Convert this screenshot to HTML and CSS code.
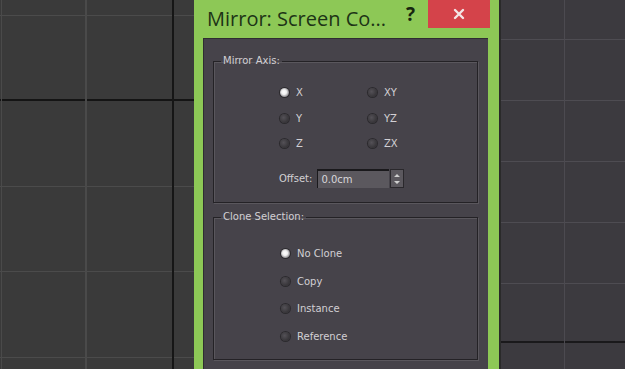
FILE: index.html
```html
<!DOCTYPE html>
<html>
<head>
<meta charset="utf-8">
<link rel="stylesheet" href="styles.css">
</head>
<body>
<div class="scene">
  <div class="viewport viewport-left"></div>
  <div class="dialog">
    <div class="titlebar">
      <div class="title">Mirror: Screen Co...</div>
      <div class="help">?</div>
      <div class="close">
        <svg width="14" height="14" viewBox="0 0 14 14"><path d="M3 3 L11 11 M11 3 L3 11" stroke="#f4e6e6" stroke-width="2.4" stroke-linecap="round"/></svg>
      </div>
    </div>
    <div class="panel">
      <fieldset class="group group-axis">
        <legend>Mirror Axis:</legend>
        <div class="axis-grid">
          <div class="radio checked"><span class="dot"></span><span>X</span></div>
          <div class="radio"><span class="dot"></span><span>XY</span></div>
          <div class="radio"><span class="dot"></span><span>Y</span></div>
          <div class="radio"><span class="dot"></span><span>YZ</span></div>
          <div class="radio"><span class="dot"></span><span>Z</span></div>
          <div class="radio"><span class="dot"></span><span>ZX</span></div>
        </div>
        <div class="offset-row">
          <span class="offset-label">Offset:</span>
          <span class="input">0.0cm</span>
          <span class="spinner">
            <svg width="8" height="14" viewBox="0 0 8 14"><path d="M1 5 L4 2 L7 5 Z M1 9 L4 12 L7 9 Z" fill="#cfcfcf"/></svg>
          </span>
        </div>
      </fieldset>
      <fieldset class="group group-clone">
        <legend>Clone Selection:</legend>
        <div class="clone-list">
          <div class="radio checked"><span class="dot"></span><span>No Clone</span></div>
          <div class="radio"><span class="dot"></span><span>Copy</span></div>
          <div class="radio"><span class="dot"></span><span>Instance</span></div>
          <div class="radio"><span class="dot"></span><span>Reference</span></div>
        </div>
      </fieldset>
    </div>
  </div>
  <div class="viewport viewport-right"></div>
</div>
</body>
</html>
```

FILE: styles.css
```css
html, body {
  margin: 0;
  padding: 0;
  background: #3a3a3b;
  overflow: hidden;
}
.scene {
  display: flex;
  width: 625px;
  height: 369px;
}
.viewport {
  height: 369px;
}
.viewport-left {
  width: 194px;
  background-color: #3a3a3a;
  background-image:
    linear-gradient(to right, transparent 1px, #4a4a4a 1px, #4a4a4a 2px, transparent 2px),
    linear-gradient(to right, transparent 85px, #4a4a4a 85px, #4a4a4a 87px, transparent 87px),
    linear-gradient(to right, transparent 172px, #161616 172px, #161616 174px, transparent 174px),
    linear-gradient(to bottom, transparent 15px, #4b4b4b 15px, #4b4b4b 16px, transparent 16px),
    linear-gradient(to bottom, transparent 99px, #141414 99px, #141414 101px, transparent 101px),
    linear-gradient(to bottom, transparent 186px, #4b4b4b 186px, #4b4b4b 187px, transparent 187px),
    linear-gradient(to bottom, transparent 271px, #4b4b4b 271px, #4b4b4b 272px, transparent 272px),
    linear-gradient(to bottom, transparent 357px, #4b4b4b 357px, #4b4b4b 358px, transparent 358px);
}
.viewport-right {
  flex: 1;
  background-color: #3c3a3f;
  background-image:
    linear-gradient(to right, transparent 0px, #2a2a2a 0px, #2a2a2a 2px, transparent 2px),
    linear-gradient(to right, transparent 65px, #4c4a50 65px, #4c4a50 66px, transparent 66px),
    linear-gradient(to bottom, transparent 39px, #4e4c52 39px, #4e4c52 40px, transparent 40px),
    linear-gradient(to bottom, transparent 100px, #4e4c52 100px, #4e4c52 101px, transparent 101px),
    linear-gradient(to bottom, transparent 161px, #4e4c52 161px, #4e4c52 162px, transparent 162px),
    linear-gradient(to bottom, transparent 222px, #4e4c52 222px, #4e4c52 223px, transparent 223px),
    linear-gradient(to bottom, transparent 283px, #4e4c52 283px, #4e4c52 284px, transparent 284px),
    linear-gradient(to bottom, transparent 341px, #1a191b 341px, #1a191b 343px, transparent 343px);
}
.dialog {
  width: 305px;
  height: 369px;
  background: #8dc856;
  display: flex;
  flex-direction: column;
}
.titlebar {
  height: 38px;
  display: flex;
  align-items: flex-start;
  flex-shrink: 0;
}
.title {
  font-family: "Open Sans", "Noto Sans", sans-serif;
  font-size: 20px;
  color: #1d3416;
  padding-left: 13px;
  padding-top: 5px;
  line-height: 28px;
  width: 196px;
  white-space: nowrap;
}
.help {
  font-family: "Open Sans", sans-serif;
  font-weight: 700;
  font-size: 19px;
  color: #17260f;
  line-height: 26px;
  padding-top: 1px;
  width: 15px;
  text-align: center;
}
.close {
  margin-left: 10px;
  width: 62px;
  height: 28px;
  background: #d4434a;
  display: flex;
  align-items: center;
  justify-content: center;
}
.panel {
  flex: 1;
  margin: 0 11px 0 9px;
  background: #46434a;
  padding: 16px 10px 0 10px;
  box-shadow: inset 1px 1px 0 #2f2d31;
}
.group {
  margin: 0;
  border: 1px solid #242226;
  box-shadow: inset 1px 1px 0 #5a575d, 1px 1px 0 #5a575d;
  padding: 0;
  font-family: "DejaVu Sans", sans-serif;
  font-size: 10px;
  color: #d2d0d4;
}
.group legend {
  margin-left: 7px;
  padding: 0 2px;
  line-height: 14px;
}
.group-axis {
  height: 147px;
}
.group-clone {
  margin-top: 7px;
  height: 148px;
}
.axis-grid {
  display: grid;
  grid-template-columns: 88px 88px;
  grid-auto-rows: 25.5px;
  margin: 12px 0 0 66px;
}
.radio {
  display: flex;
  align-items: center;
  gap: 7px;
  height: 25px;
}
.dot {
  width: 9px;
  height: 9px;
  border-radius: 50%;
  background: radial-gradient(circle at 40% 40%, #545157 0, #3a383c 60%, #2a282c 100%);
  box-shadow: 0 0 0 1px #2c2a2e;
  flex-shrink: 0;
}
.radio.checked .dot {
  background: radial-gradient(circle at 45% 45%, #ffffff 0, #f0f0f0 35%, #8c8a8e 70%, #3a383c 100%);
}
.offset-row {
  display: flex;
  align-items: center;
  margin: 12px 0 0 65px;
  height: 20px;
}
.offset-label {
  margin-right: 5px;
}
.input {
  width: 68px;
  height: 17px;
  background: #5b585e;
  border-top: 2px solid #1a191c;
  border-left: 1px solid #1a191c;
  padding-left: 3px;
  line-height: 17px;
  color: #d8d6da;
}
.spinner {
  margin-left: 1px;
  width: 14px;
  height: 19px;
  background: #5b585e;
  border: 1px solid #2a282c;
  display: flex;
  align-items: center;
  justify-content: center;
  box-sizing: border-box;
}
.clone-list {
  display: flex;
  flex-direction: column;
  margin: 16px 0 0 67px;
}
.clone-list .radio {
  height: 27.5px;
}
```
